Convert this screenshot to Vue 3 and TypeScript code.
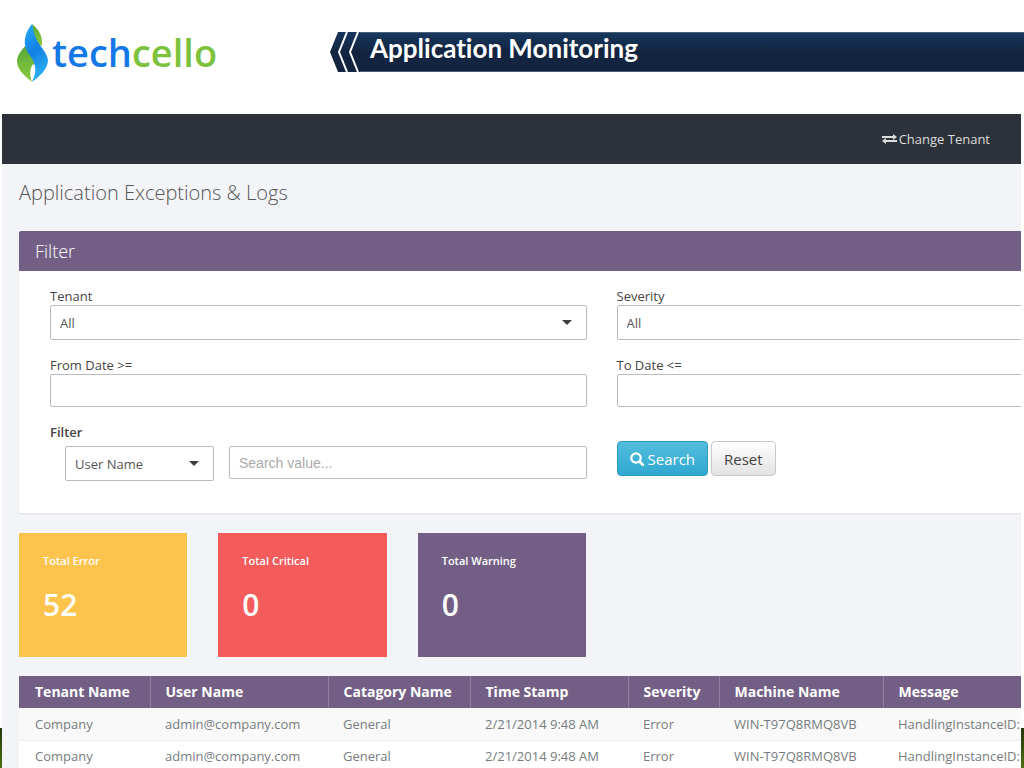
<script setup lang="ts">
import { ref } from 'vue'

interface Stat {
  label: string
  value: number
  tone: string
}

interface LogRow {
  tenant: string
  user: string
  category: string
  time: string
  severity: string
  machine: string
  message: string
}

const tenant = ref('All')
const severity = ref('All')
const fromDate = ref('')
const toDate = ref('')
const field = ref('User Name')
const query = ref('')

const stats: Stat[] = [
  { label: 'Total Error', value: 52, tone: 'yellow' },
  { label: 'Total Critical', value: 0, tone: 'red' },
  { label: 'Total Warning', value: 0, tone: 'purple' },
]

const columns: string[] = [
  'Tenant Name',
  'User Name',
  'Catagory Name',
  'Time Stamp',
  'Severity',
  'Machine Name',
  'Message',
]

const entry: LogRow = {
  tenant: 'Company',
  user: 'admin@company.com',
  category: 'General',
  time: '2/21/2014 9:48 AM',
  severity: 'Error',
  machine: 'WIN-T97Q8RMQ8VB',
  message: 'HandlingInstanceID:',
}
const rows: LogRow[] = [entry, { ...entry }]

function reset(): void {
  tenant.value = 'All'
  severity.value = 'All'
  fromDate.value = ''
  toDate.value = ''
  field.value = 'User Name'
  query.value = ''
}
</script>

<template>
  <div class="page">
    <header class="masthead">
      <div class="logo">
        <svg class="flame" width="32" height="60" viewBox="0 0 32 60" aria-hidden="true">
          <defs>
            <linearGradient id="flame-blue" x1="0.3" y1="0" x2="0.6" y2="1">
              <stop offset="0" stop-color="#22a6f2" />
              <stop offset="0.45" stop-color="#1480e4" />
              <stop offset="1" stop-color="#2fb6f6" />
            </linearGradient>
            <linearGradient id="flame-green" x1="0" y1="0" x2="0" y2="1">
              <stop offset="0" stop-color="#59a83c" />
              <stop offset="1" stop-color="#8ccb3c" />
            </linearGradient>
          </defs>
          <path d="M15 1C21 6 26 12 25 23L16 18Z" fill="url(#flame-green)" />
          <path d="M8 23C3 29 0 33 0 38C0 47 8 53 15 59C12 52 14 45 19 38Z" fill="url(#flame-green)" />
          <path d="M15 1C10 7 7 14 8 22C9 31 17 34 18 44C19 50 17 54 15 59C23 53 30 47 31 38C31 30 22 23 19 15C17 10 16 6 15 1Z" fill="url(#flame-blue)" />
          <path d="M16 41C12 47 13 52 15 57C17 52 19 47 16 41Z" fill="#fff" />
        </svg>
        <span class="wordmark"><span class="tech">tech</span><span class="cello">cello</span></span>
      </div>
      <div class="banner">
        <svg class="chevrons" width="30" height="40" viewBox="0 0 30 40" aria-hidden="true">
          <defs>
            <linearGradient id="chevron-navy" x1="0" y1="0" x2="0" y2="1">
              <stop offset="0" stop-color="#17375e" />
              <stop offset="0.5" stop-color="#12243f" />
              <stop offset="1" stop-color="#12243f" />
            </linearGradient>
          </defs>
          <path d="M8 0H30V40H8L0 20Z" fill="url(#chevron-navy)" />
          <path d="M17 0L9 20L17 40M28 0L20 20L28 40" fill="none" stroke="#fff" stroke-width="2" />
        </svg>
        <h1>Application Monitoring</h1>
      </div>
    </header>

    <div class="frame">
      <nav class="topbar">
        <a href="#" class="change">
          <svg width="15" height="10" viewBox="0 0 15 10" aria-hidden="true">
            <path d="M0 2H11V0L15 3L11 6V4H0Z" fill="currentColor" />
            <path d="M15 6H4V4L0 7L4 10V8H15Z" fill="currentColor" />
          </svg>
          Change Tenant
        </a>
      </nav>

      <main class="content">
        <h2>Application Exceptions &amp; Logs</h2>

        <section class="panel">
          <h3>Filter</h3>
          <form class="filters" @submit.prevent>
            <div class="field">
              <label for="tenant">Tenant</label>
              <div class="select">
                <select id="tenant" v-model="tenant"><option>All</option></select>
                <svg width="10" height="5" viewBox="0 0 10 5" aria-hidden="true"><path d="M0 0H10L5 5Z" fill="#3d3d3d" /></svg>
              </div>
            </div>
            <div class="field">
              <label for="severity">Severity</label>
              <div class="select">
                <select id="severity" v-model="severity"><option>All</option></select>
                <svg width="10" height="5" viewBox="0 0 10 5" aria-hidden="true"><path d="M0 0H10L5 5Z" fill="#3d3d3d" /></svg>
              </div>
            </div>
            <div class="field">
              <label for="from">From Date &gt;=</label>
              <input id="from" v-model="fromDate" type="text" />
            </div>
            <div class="field">
              <label for="to">To Date &lt;=</label>
              <input id="to" v-model="toDate" type="text" />
            </div>
            <div class="field">
              <label for="by" class="strong">Filter</label>
              <div class="lookup">
                <div class="select">
                  <select id="by" v-model="field"><option>User Name</option></select>
                  <svg width="10" height="5" viewBox="0 0 10 5" aria-hidden="true"><path d="M0 0H10L5 5Z" fill="#3d3d3d" /></svg>
                </div>
                <input v-model="query" type="text" placeholder="Search value..." aria-label="Search value" />
              </div>
            </div>
            <div class="actions">
              <button type="submit" class="primary">
                <svg width="14" height="14" viewBox="0 0 14 14" aria-hidden="true">
                  <circle cx="6" cy="6" r="4.7" fill="none" stroke="currentColor" stroke-width="2.2" />
                  <path d="M9.5 9.5L13 13" stroke="currentColor" stroke-width="2.6" stroke-linecap="round" />
                </svg>
                Search
              </button>
              <button type="button" @click="reset">Reset</button>
            </div>
          </form>
        </section>

        <section class="stats">
          <div v-for="s in stats" :key="s.label" class="stat" :class="s.tone">
            <span class="caption">{{ s.label }}</span>
            <span class="value">{{ s.value }}</span>
          </div>
        </section>

        <table>
          <thead>
            <tr><th v-for="c in columns" :key="c" scope="col">{{ c }}</th></tr>
          </thead>
          <tbody>
            <tr v-for="(r, i) in rows" :key="i">
              <td>{{ r.tenant }}</td>
              <td>{{ r.user }}</td>
              <td>{{ r.category }}</td>
              <td>{{ r.time }}</td>
              <td>{{ r.severity }}</td>
              <td>{{ r.machine }}</td>
              <td>{{ r.message }}</td>
            </tr>
          </tbody>
        </table>
      </main>
    </div>
  </div>
</template>

<style>
body {
  margin: 0;
  overflow: hidden;
}
</style>

<style scoped>
* {
  box-sizing: border-box;
}

.page {
  display: flex;
  flex-direction: column;
  height: 100vh;
  overflow: hidden;
  background: linear-gradient(#24370a, #4c7010) bottom / 100% 40px no-repeat #fff;
  font-family: "Open Sans", "Noto Sans", sans-serif;
  font-size: 13px;
  line-height: 18px;
  color: #444;
}

.masthead {
  flex: none;
  display: flex;
  height: 114px;
  background: #fff;
}

.logo {
  display: flex;
  width: 330px;
  padding: 23px 0 0 17px;
}

.wordmark {
  margin-left: 3px;
  font-size: 38px;
  font-weight: 600;
  line-height: 58px;
}

.tech {
  color: #1478e6;
}

.cello {
  color: #7cc23c;
}

.banner {
  flex: 1;
  display: flex;
  height: 40px;
  margin-top: 32px;
}

h1 {
  flex: 1;
  margin: 0;
  padding-left: 10px;
  border: solid #4a6076;
  border-width: 1px 0;
  background: linear-gradient(#17375e, #12243f 50%, #12243f);
  color: #fff;
  font-family: Lato, "Open Sans", sans-serif;
  font-size: 26px;
  font-variant-ligatures: none;
  font-weight: 700;
  line-height: 30px;
}

.frame {
  flex: 1;
  min-height: 0;
  margin: 0 3px 0 2px;
  overflow: hidden;
  background: #f3f4f8;
}

.topbar {
  display: flex;
  align-items: center;
  justify-content: flex-end;
  height: 50px;
  padding-right: 31px;
  background: #2d323a;
}

.change {
  display: flex;
  align-items: center;
  gap: 2px;
  color: #dcdcdc;
  text-decoration: none;
}

.content {
  width: 116%;
  padding-left: 17px;
}

h2 {
  margin: 0;
  padding: 14px 0 23px;
  color: #555;
  font-size: 20px;
  font-weight: 300;
  line-height: 30px;
}

.panel {
  border-radius: 2px;
  background: #fff;
  box-shadow: 0 1px 2px #dcdfe6;
}

h3 {
  margin: 0;
  padding-left: 16px;
  border-radius: 2px 2px 0 0;
  background: #735f86;
  color: #fff;
  font-size: 18px;
  font-weight: 300;
  line-height: 40px;
}

.filters {
  display: grid;
  grid-template-columns: 1fr 1fr;
  gap: 16px 30px;
  padding: 16px 31px 32px;
}

.field {
  display: flex;
  flex-direction: column;
}

.strong {
  font-weight: 600;
}

.select {
  position: relative;
}

.select svg {
  position: absolute;
  right: 15px;
  top: 15px;
  pointer-events: none;
}

select,
input {
  display: block;
  width: 100%;
  border: 1px solid #bbb;
  border-radius: 2px;
  background: #fff;
  color: #555;
  font: inherit;
}

select {
  height: 35px;
  padding: 0 9px;
  appearance: none;
}

input {
  height: 33px;
  padding: 0 9px;
  font-family: "Liberation Sans", Arial, sans-serif;
  font-size: 14px;
}

input::placeholder {
  color: #aaa;
}

.lookup {
  display: grid;
  grid-template-columns: 149px 1fr;
  gap: 15px;
  padding: 5px 0 0 15px;
}

.actions {
  display: flex;
  align-items: flex-start;
  gap: 3px;
  padding-top: 18px;
}

button {
  display: flex;
  align-items: center;
  gap: 4px;
  height: 35px;
  padding: 0 12px;
  border: 1px solid #c8c8c8;
  border-radius: 4px;
  background: linear-gradient(#fff, #e2e2e2);
  color: #444;
  font: inherit;
  font-size: 15px;
}

.primary {
  border-color: #2d9cba;
  background: linear-gradient(#54bddc, #2fa8d2);
  color: #fff;
}

.stats {
  display: grid;
  grid-template-columns: repeat(6, 1fr);
  gap: 31px;
  padding: 20px 0 19px;
}

.stat {
  display: flex;
  flex-direction: column;
  gap: 15px;
  height: 124px;
  padding: 19px 24px;
  color: #fff;
}

.caption {
  font-size: 11px;
  font-weight: 600;
}

.value {
  font-size: 30px;
  font-weight: 600;
  line-height: 40px;
}

.yellow {
  background: #fcc44d;
}

.red {
  background: #f45b5b;
}

.purple {
  background: #735f86;
}

table {
  width: 100%;
  border-collapse: collapse;
  table-layout: fixed;
  background: #fff;
}

th,
td {
  height: 32px;
  padding: 0 0 0 15px;
  text-align: left;
  white-space: nowrap;
}

th:first-child,
td:first-child {
  padding-left: 16px;
}

th {
  border-right: 1px solid #8f7fa0;
  background: #735f86;
  color: #fff;
  font-size: 14px;
  font-weight: 700;
}

td {
  border-bottom: 1px solid #ececec;
  color: #777c80;
}

tbody tr:nth-child(odd) {
  background: #f9f9f9;
}

th:nth-child(1) {
  width: 131px;
}

th:nth-child(2) {
  width: 178px;
}

th:nth-child(3) {
  width: 142px;
}

th:nth-child(4) {
  width: 158px;
}

th:nth-child(5) {
  width: 91px;
}

th:nth-child(6) {
  width: 164px;
}
</style>
